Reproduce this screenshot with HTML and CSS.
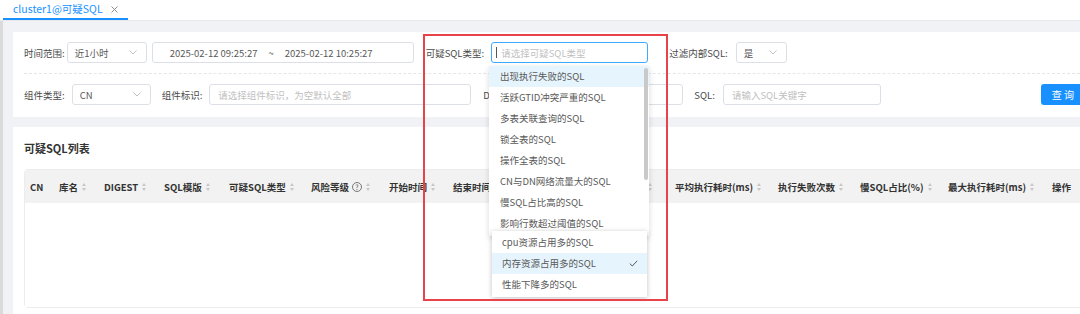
FILE: index.html
```html
<!DOCTYPE html>
<html>
<head>
    <meta charset="utf-8">
    <link rel="stylesheet" href="styles.css">
</head>
<body>

    <div class="tabs">
        <div class="tab active">cluster1@可疑SQL
            <svg class="close" width="7" height="7" viewBox="0 0 7 7"><path d="M0.5 0.5 L6.5 6.5 M6.5 0.5 L0.5 6.5" stroke="#8c8c8c" stroke-width="1"/></svg>
        </div>
    </div>

    <div class="main">
        <div class="rail"></div>
        <div class="content">

            <div class="card filters">
                <div class="frow top">
                    <span class="lbl">时间范围:</span>
                    <div class="sel sel-time">近1小时
                        <svg class="arrow" width="8" height="5" viewBox="0 0 8 5"><path d="M0.5 0.5 L4 4 L7.5 0.5" fill="none" stroke="#bfbfbf" stroke-width="1"/></svg>
                    </div>
                    <div class="range">
                        <span>2025-02-12 09:25:27</span>
                        <span class="tilde">~</span>
                        <span>2025-02-12 10:25:27</span>
                    </div>
                    <span class="lbl lbl-type">可疑SQL类型:</span>
                    <div class="inp inp-type focused"><span class="caret"></span>请选择可疑SQL类型</div>
                    <span class="lbl lbl-filter">过滤内部SQL:</span>
                    <div class="sel sel-yes">是
                        <svg class="arrow" width="8" height="5" viewBox="0 0 8 5"><path d="M0.5 0.5 L4 4 L7.5 0.5" fill="none" stroke="#bfbfbf" stroke-width="1"/></svg>
                    </div>
                </div>
                <div class="frow">
                    <span class="lbl">组件类型:</span>
                    <div class="sel sel-cn">CN
                        <svg class="arrow" width="8" height="5" viewBox="0 0 8 5"><path d="M0.5 0.5 L4 4 L7.5 0.5" fill="none" stroke="#bfbfbf" stroke-width="1"/></svg>
                    </div>
                    <span class="lbl lbl-comp">组件标识:</span>
                    <div class="inp inp-comp">请选择组件标识，为空默认全部</div>
                    <span class="lbl lbl-dn">DN标识:</span>
                    <div class="inp inp-dn"></div>
                    <span class="lbl lbl-sql">SQL:</span>
                    <div class="inp inp-sql">请输入SQL关键字</div>
                    <button class="btn">查 询</button>
                </div>
            </div>

            <div class="card list">
                <div class="title">可疑SQL列表</div>
                <div class="table">
                    <div class="thead">
                        <div class="th">CN</div>
                        <div class="th">库名<span class="sorter"></span></div>
                        <div class="th">DIGEST<span class="sorter"></span></div>
                        <div class="th">SQL模版<span class="sorter"></span></div>
                        <div class="th">可疑SQL类型<span class="sorter"></span></div>
                        <div class="th">风险等级<span class="help">?</span><span class="sorter"></span></div>
                        <div class="th">开始时间<span class="sorter"></span></div>
                        <div class="th">结束时间<span class="sorter"></span></div>
                        <div class="th">执行次数<span class="sorter"></span></div>
                        <div class="th">总执行耗时(ms)<span class="sorter"></span></div>
                        <div class="th">平均执行耗时(ms)<span class="sorter"></span></div>
                        <div class="th">执行失败次数<span class="sorter"></span></div>
                        <div class="th">慢SQL占比(%)<span class="sorter"></span></div>
                        <div class="th">最大执行耗时(ms)<span class="sorter"></span></div>
                        <div class="th">操作</div>
                    </div>
                    <div class="tbody"></div>
                </div>
            </div>

        </div>
    </div>

    <!-- dropdown of 可疑SQL类型 -->
    <div class="dropdown drop-main">
        <div class="opt hover">出现执行失败的SQL</div>
        <div class="opt">活跃GTID冲突严重的SQL</div>
        <div class="opt">多表关联查询的SQL</div>
        <div class="opt">锁全表的SQL</div>
        <div class="opt">操作全表的SQL</div>
        <div class="opt">CN与DN网络流量大的SQL</div>
        <div class="opt">慢SQL占比高的SQL</div>
        <div class="opt">影响行数超过阈值的SQL</div>
        <div class="scroll"></div>
    </div>

    <div class="dropdown drop-more">
        <div class="opt">cpu资源占用多的SQL</div>
        <div class="opt selected">内存资源占用多的SQL
            <svg class="check" width="9" height="7" viewBox="0 0 9 7"><path d="M0.8 3.6 L3.3 6 L8.2 0.8" fill="none" stroke="#595959" stroke-width="1"/></svg>
        </div>
        <div class="opt">性能下降多的SQL</div>
    </div>

    <div class="mark"></div>

</body>
</html>
```

FILE: styles.css
```css
html, body {
    margin: 0;
    padding: 0;
    overflow: hidden;
}

body {
    background-color: #f0f2f5;
    font-family: "Noto Sans CJK SC", "Noto Sans", sans-serif;
    font-size: 9.5px;
    color: #4a4a4a;
    width: 1080px;
    height: 314px;
    position: relative;
}

/* tab bar */
.tabs {
    height: 20px;
    background-color: white;
    border-bottom: 1px solid #e6e8eb;
    display: flex;
    padding-left: 3px;
}

.tab {
    padding: 0 10px;
    height: 18px;
    line-height: 20px;
    font-size: 10.5px;
    border-bottom: 2px solid #1890ff;
    color: #1890ff;
    display: flex;
    align-items: center;
}

.tab .close {
    margin-left: 8px;
    margin-top: 1px;
}

.main {
    display: flex;
    height: 293px;
}

.rail {
    width: 3px;
    background-color: #dadada;
}

.content {
    flex: 1;
    padding: 11px 0 0 10px;
    overflow: hidden;
}

.card {
    background-color: white;
}

/* filters */
.filters {
    padding: 0 0 0 11px;
    height: 85px;
}

.frow {
    display: flex;
    align-items: center;
    height: 21px;
    padding: 10px 0 11px 0;
}

.frow.top {
    border-bottom: 1px dashed #e4e6ea;
    padding: 10px 0 10px 0;
}

.lbl {
    white-space: nowrap;
    color: #4a4a4a;
}

.sel, .inp, .range {
    height: 19px;
    border: 1px solid #dcdfe6;
    border-radius: 3px;
    display: flex;
    align-items: center;
    white-space: nowrap;
    box-sizing: content-box;
    flex-shrink: 0;
}

.sel {
    justify-content: space-between;
    padding: 0 9px 0 7px;
    color: #595959;
}

.arrow {
    display: block;
}

.sel-time {
    margin-left: 2px;
    width: 62px;
}

.range {
    margin-left: 5px;
    width: 243px;
    padding-left: 17px;
    color: #595959;
}

.tilde {
    margin: 0 11px;
}

.lbl-type {
    margin-left: 12px;
}

.inp {
    padding-left: 8px;
    color: #bfbfbf;
}

.inp-type {
    margin-left: 7px;
    width: 147px;
    border-color: #40a9ff;
}

.caret {
    width: 1px;
    height: 11px;
    background-color: #555;
    margin-right: 4px;
    margin-left: -4px;
}

.lbl-filter {
    margin-left: 21px;
}

.sel-yes {
    margin-left: 8px;
    width: 33px;
}

.sel-cn {
    margin-left: 7px;
    width: 61px;
}

.lbl-comp {
    margin-left: 11px;
}

.inp-comp {
    margin-left: 7px;
    width: 252px;
}

.lbl-dn {
    margin-left: 12px;
}

.inp-dn {
    margin-left: 7px;
    width: 148px;
}

.lbl-sql {
    margin-left: 11px;
}

.inp-sql {
    margin-left: 8px;
    width: 148px;
}

.btn {
    margin-left: 160px;
    width: 44px;
    height: 21px;
    border: none;
    border-radius: 3px;
    background-color: #1890ff;
    color: white;
    font-family: inherit;
    font-size: 10px;
    padding: 0;
    flex-shrink: 0;
}

/* list card */
.list {
    margin-top: 10px;
    padding: 13px 0 0 11px;
    height: 180px;
    overflow: hidden;
}

.title {
    font-size: 11px;
    font-weight: bold;
    color: #333;
    line-height: 16px;
    margin-bottom: 13px;
}

.table {
    width: 1100px;
    border: 1px solid #ececec;
    border-radius: 4px;
}

.thead {
    display: grid;
    grid-template-columns: 29px 45px 60px 65px 82px 78px 64px 67px 55px 100px 103px 82px 88px 104px 60px;
    height: 33px;
    background-color: #f2f2f2;
    align-items: center;
}

.th {
    padding-left: 5px;
    font-weight: bold;
    font-size: 9.5px;
    color: #333;
    white-space: nowrap;
    display: flex;
    align-items: center;
    overflow: hidden;
}

.sorter {
    display: flex;
    flex-direction: column;
    gap: 2px;
    margin-left: 4px;
}

.sorter::before, .sorter::after {
    content: "";
    width: 0;
    height: 0;
    border-left: 2.5px solid transparent;
    border-right: 2.5px solid transparent;
}

.sorter::before {
    border-bottom: 3px solid #c8c8c8;
}

.sorter::after {
    border-top: 3px solid #c8c8c8;
}

.help {
    width: 8px;
    height: 8px;
    border: 1px solid #777;
    border-radius: 50%;
    font-size: 7px;
    line-height: 8px;
    text-align: center;
    font-weight: normal;
    color: #555;
    margin-left: 3px;
}

.tbody {
    height: 104px;
    background-color: white;
}

/* dropdowns and annotation */
.dropdown {
    position: absolute;
    background-color: white;
    box-shadow: 0 2px 6px rgba(0, 0, 0, 0.15);
    color: #595959;
}

.drop-main {
    left: 489px;
    top: 66px;
    width: 160px;
    height: 170px;
    overflow: hidden;
}

.opt {
    height: 21px;
    line-height: 21px;
    padding-left: 11px;
    white-space: nowrap;
    position: relative;
}

.opt.hover, .opt.selected {
    background-color: #e6f4fd;
}

.scroll {
    position: absolute;
    right: 1px;
    top: 2px;
    width: 4px;
    height: 112px;
    border-radius: 2px;
    background-color: #c9c9c9;
}

.drop-more {
    left: 492px;
    top: 231px;
    width: 155px;
    height: 66px;
    padding-top: 1px;
    box-sizing: border-box;
    box-shadow: 0 1px 5px rgba(0, 0, 0, 0.25);
}

.drop-more .opt {
    padding-left: 10px;
}

.check {
    position: absolute;
    right: 9px;
    top: 7px;
}

.mark {
    position: absolute;
    left: 423px;
    top: 34px;
    width: 245px;
    height: 267px;
    border: 2px solid #e8424b;
    box-sizing: border-box;
}
```
